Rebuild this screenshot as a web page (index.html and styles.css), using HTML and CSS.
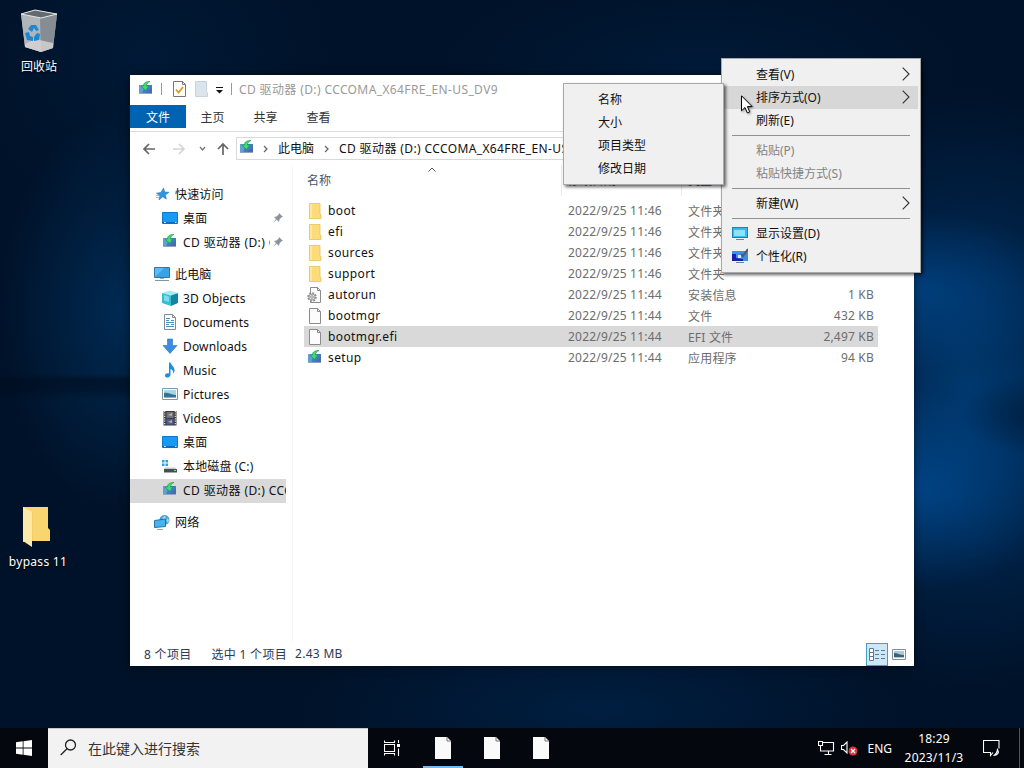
FILE: index.html
```html
<!DOCTYPE html>
<html lang="zh-CN">
<head>
    <meta charset="UTF-8">
    <meta name="viewport" content="width=device-width, initial-scale=1.0">
    <title>CD 驱动器 (D:) CCCOMA_X64FRE_EN-US_DV9</title>
    <link rel="stylesheet" href="styles.css">
</head>
<body>
    <svg class="sprite" width="0" height="0">
        <symbol id="i-setup" viewBox="0 0 16 16">
            <path d="M1 4h13v9H1z" fill="#3f7fc1"/>
            <path d="M1 4h6l-3 9H1z" fill="#5fa0cf"/>
            <path d="M7 13l7-7v7z" fill="#4f68b5"/>
            <path d="M1 12h13v1H1z" fill="#8fa6bd"/>
            <path d="M12 .5C8 .5 5.500 1.500 5.500 5H3l4.500 4.500L11 5H8.500C8.500 3 9.500 1.500 12 .5z" fill="#3ddc70" stroke="#178f4a" stroke-width=".6"/>
        </symbol>
        <symbol id="i-folder" viewBox="0 0 16 16">
            <path d="M2 .5h11v10l1 1v4H2z" fill="#fbdc79"/>
            <path d="M2 .5h3v15H2z" fill="#fde79b"/>
            <path d="M2.500 .5h10.500v10.500l1 1v3.500H2.500z" fill="none" stroke="#e3c15d" stroke-width=".8"/>
        </symbol>
        <symbol id="i-file" viewBox="0 0 16 16">
            <path d="M2.500 .5h8l3 3v12h-11z" fill="#fcfcfc" stroke="#8b8b8b"/>
            <path d="M10.500 .5v3h3" fill="none" stroke="#8b8b8b"/>
        </symbol>
        <symbol id="i-autorun" viewBox="0 0 16 16">
            <path d="M3.500 .5h7l3 3v12h-10z" fill="#fcfcfc" stroke="#8b8b8b"/>
            <path d="M10.500 .5v3h3" fill="none" stroke="#8b8b8b"/>
            <circle cx="5" cy="10" r="4" fill="#e4e4e4" stroke="#8c8c8c" stroke-width="1.600" stroke-dasharray="1.800 1.300"/>
            <circle cx="5" cy="10" r="3" fill="#e8e8e8" stroke="#8c8c8c" stroke-width=".8"/>
            <circle cx="5" cy="10" r="1.300" fill="#fff" stroke="#777" stroke-width=".8"/>
        </symbol>
        <symbol id="i-desktop" viewBox="0 0 16 16">
            <path d="M.5 2.500h15v11H.5z" fill="#1a98f5" stroke="#1177c8"/>
            <path d="M1 12h14v1.500H1z" fill="#0c6ab8"/>
            <path d="M2 12.500h2M13 12.500h1.500" stroke="#bfe2ff"/>
        </symbol>
        <symbol id="i-star" viewBox="0 0 16 16">
            <path d="M9.500 2l1.200 4 4.300.3-3.500 2.500.8 4.200-3.600-2.200L5 14l.9-4.300L2.500 7.200l4.500-.8z" fill="#2f97e0" stroke="#1c78bd" stroke-width=".6"/>
            <path d="M2 9.500h3M2 11.500h3" stroke="#5fb2ec" stroke-width=".8"/>
        </symbol>
        <symbol id="i-pc" viewBox="0 0 16 16">
            <path d="M.5 1.500h15v10H.5z" fill="#5cbcf5" stroke="#35749f"/>
            <path d="M1 11L10 2h5v9z" fill="#36a3e8"/>
            <path d="M1 14.500h14" stroke="#7f97a5"/>
            <path d="M6 12.500h4" stroke="#9ab"/>
        </symbol>
        <symbol id="i-cube" viewBox="0 0 16 16">
            <path d="M0 3l8-2.500L16 3 9 5.500z" fill="#a6eaf4"/>
            <path d="M0 3l9 2.500V16l-9-3z" fill="#35bdd6"/>
            <path d="M9 5.500L16 3v10l-7 3z" fill="#10869f"/>
            <path d="M2 5l5 1.500V12l-5-1.500z" fill="#7edbea"/>
        </symbol>
        <symbol id="i-doc" viewBox="0 0 16 16">
            <path d="M2.500 .5h8l3 3v12h-11z" fill="#fff" stroke="#7f8b93"/>
            <path d="M10.500 .5v3h3" fill="none" stroke="#7f8b93"/>
            <path d="M4 4.500h4M4 6.500h3M9 6.500h3M4 8.500h8M4 10.500h3M9 10.500h3M4 12.500h8" stroke="#4b8cb9"/>
        </symbol>
        <symbol id="i-down" viewBox="0 0 16 16">
            <path d="M5.500 1h5v6.500H15L8 15.500 1 7.500h4.500z" fill="#3a8de0" stroke="#2a72bf" stroke-width=".6"/>
        </symbol>
        <symbol id="i-music" viewBox="0 0 16 16">
            <path d="M7 .5h1.500C9 3.500 13 4.500 12.500 9c-.5 1.500-1 2-1.500 2.500.5-3-1-4-2.500-4.500V13c-.5 3-5.500 3.500-5.500.8C3 11.500 5.500 11 7 11.500z" fill="#1a8fdc"/>
        </symbol>
        <symbol id="i-picture" viewBox="0 0 16 16">
            <path d="M.5 2.500h15v11H.5z" fill="#fff" stroke="#8395a0"/>
            <path d="M2 4h12v8H2z" fill="#a8d4ee"/>
            <path d="M2 7c4-1 7 2 12 2v3H2z" fill="#3c6f92"/>
            <path d="M2 11h12v1H2z" fill="#7db5c9"/>
        </symbol>
        <symbol id="i-video" viewBox="0 0 16 16">
            <path d="M1.500 1h13v14.500h-13z" fill="#3a3a3a"/>
            <path d="M2.700 1v14.500M13.300 1v14.500" stroke="#e8e8e8" stroke-width="1.200" stroke-dasharray="1.200 1.200"/>
            <path d="M4.500 2h7v6h-7z" fill="#74708a"/>
            <path d="M4.500 9h7v5.500h-7z" fill="#4f5aa0"/>
            <path d="M6 5l4-2v3zM6 12l4-2v3z" fill="#d5b548"/>
        </symbol>
        <symbol id="i-disk" viewBox="0 0 16 16">
            <path d="M0 2h2.500v2.500H0zM3.500 2H6v2.500H3.500zM0 5.500h2.500V8H0zM3.500 5.500H6V8H3.500z" fill="#22a4dc"/>
            <path d="M3 9.500h10l1.500 2h-13z" fill="#c6cacc"/>
            <path d="M2 11h13v3.500H2z" fill="#4a4d50"/>
            <path d="M12 12.500h2" stroke="#7ee08c"/>
        </symbol>
        <symbol id="i-network" viewBox="0 0 16 16">
            <circle cx="10.500" cy="6" r="5" fill="#4a9fcf"/>
            <path d="M8 4l3-2.500 1 2.500-2 2zM13 4l2 2-1 3-1.500-2z" fill="#a9d8ec"/>
            <path d="M.5 6.500l11-1.500v7.500l-11 1z" fill="#45b3f2" stroke="#27729e"/>
            <path d="M3 15.500h6" stroke="#7eaac4"/>
        </symbol>
        <symbol id="i-pin" viewBox="0 0 12 12">
            <path d="M7 1l4 4-1.500.3L7.500 7.500 7 10 4.800 7.800 1 11l3-4L2 5l2.500-.5L6.700 2.500z" fill="#8b949b"/>
        </symbol>
        <symbol id="i-page" viewBox="0 0 16 22">
            <path d="M0 0h12l4 4v18H0z" fill="#fafafa"/>
            <path d="M12 0v4h4" fill="none" stroke="#777"/>
        </symbol>
        <symbol id="i-more" viewBox="0 0 8 14">
            <path d="M.7 .7L7 7 .7 13.300" fill="none" stroke="#333" stroke-width="1.100"/>
        </symbol>
        <symbol id="i-crumb" viewBox="0 0 5 8">
            <path d="M1 1l3 3-3 3" fill="none" stroke="#666" stroke-width="1.300"/>
        </symbol>
    </svg>

    <main class="desktop">
        <div class="shortcut recycle">
            <svg width="40" height="44" viewBox="0 0 40 44">
                <path d="M1 5L15 1l22 4-4 34-12 4L5 38z" fill="#a3a9ae"/>
                <path d="M1 5l19 4 1 34L5 38z" fill="#b0b5ba"/>
                <path d="M20 9l17-4-4 34-12 4z" fill="#858d93"/>
                <path d="M5 35l10-5 18 4v5l-12 4L5 38z" fill="#d9d5d5" opacity=".8"/>
                <path d="M1 5l14-4 22 4-16 4z" fill="#646b70" stroke="#e3e6e8"/>
                <path d="M8 20l3-4h5l3 5-3 1-2-3-2 4zM5 24l4-1 1 4 3 1v4l-6-1zM14 28l3-4 3 1-1 6-5 1z" fill="#1f87cf"/>
            </svg>
            <span>回收站</span>
        </div>
        <div class="shortcut bypass">
            <svg width="28" height="42" viewBox="0 0 28 42">
                <path d="M0 1h25v21l2 2v11H8L0 36z" fill="#f9d56f"/>
                <path d="M0 1l9 5v35l-9-6z" fill="#fde9a8"/>
                <path d="M9 5h1v30H9z" fill="#f3cd66"/>
            </svg>
            <span>bypass 11</span>
        </div>

        <section class="window">
            <header class="titlebar">
                <svg class="icon"><use href="#i-setup"/></svg>
                <i class="sep"></i>
                <svg class="quick check" viewBox="0 0 13 16">
                    <path d="M.5 .5h9l3 3v12H.5z" fill="#fff" stroke="#7d7370"/>
                    <path d="M9.500 .5v3h3" fill="none" stroke="#7d7370"/>
                    <path d="M3 8.500l2.500 3L10 6" fill="none" stroke="#e29a1c" stroke-width="1.800"/>
                </svg>
                <svg class="quick blank" viewBox="0 0 13 16">
                    <path d="M.5 .5h11v10l1 1v4H.5z" fill="#dbe3ec" stroke="#c9d3de"/>
                </svg>
                <svg class="drop" viewBox="0 0 7 7"><path d="M0 .5h7" stroke="#111"/><path d="M0 3h7L3.500 6.500z" fill="#111"/></svg>
                <i class="sep near"></i>
                <h1>CD 驱动器 (D:) CCCOMA_X64FRE_EN-US_DV9</h1>
            </header>
            <nav class="tabs">
                <span class="tab file">文件</span>
                <span class="tab">主页</span>
                <span class="tab">共享</span>
                <span class="tab">查看</span>
            </nav>
            <div class="toolbar">
                <svg class="arrows" width="94" height="14" viewBox="0 0 94 14" fill="none" stroke="#666" stroke-width="1.700">
                    <path d="M7 2L2 7l5 5M2 7h11"/>
                    <path d="M37 2l5 5-5 5M42 7H31" stroke="#d4d4d4"/>
                    <path d="M58 5l2.500 3L63 5" stroke="#777" stroke-width="1.300"/>
                    <path d="M76 7l5-5 5 5M81 2v11"/>
                </svg>
                <div class="address">
                    <svg class="icon"><use href="#i-setup"/></svg>
                    <svg class="crumb"><use href="#i-crumb"/></svg>
                    <span>此电脑</span>
                    <svg class="crumb last"><use href="#i-crumb"/></svg>
                    <span class="path">CD 驱动器 (D:) CCCOMA_X64FRE_EN-US_DV9</span>
                </div>
            </div>
            <div class="content">
                <ul class="tree">
                    <li class="root"><svg class="icon"><use href="#i-star"/></svg>快速访问</li>
                    <li><svg class="icon"><use href="#i-desktop"/></svg>桌面<svg class="pin"><use href="#i-pin"/></svg></li>
                    <li><svg class="icon"><use href="#i-setup"/></svg><span class="cut">CD 驱动器 (D:) CCCOMA</span><svg class="pin"><use href="#i-pin"/></svg></li>
                    <li class="root"><svg class="icon"><use href="#i-pc"/></svg>此电脑</li>
                    <li><svg class="icon"><use href="#i-cube"/></svg>3D Objects</li>
                    <li><svg class="icon"><use href="#i-doc"/></svg>Documents</li>
                    <li><svg class="icon"><use href="#i-down"/></svg>Downloads</li>
                    <li><svg class="icon"><use href="#i-music"/></svg>Music</li>
                    <li><svg class="icon"><use href="#i-picture"/></svg>Pictures</li>
                    <li><svg class="icon"><use href="#i-video"/></svg>Videos</li>
                    <li><svg class="icon"><use href="#i-desktop"/></svg>桌面</li>
                    <li><svg class="icon"><use href="#i-disk"/></svg>本地磁盘 (C:)</li>
                    <li class="selected"><svg class="icon"><use href="#i-setup"/></svg><span>CD 驱动器 (D:) CCCOMA</span></li>
                    <li class="root"><svg class="icon"><use href="#i-network"/></svg>网络</li>
                </ul>
                <div class="files">
                    <div class="head">
                        <span>名称</span><span>修改日期</span><span>类型</span><span></span>
                        <svg class="sort" viewBox="0 0 8 5"><path d="M.5 4.500L4 1l3.500 3.500" fill="none" stroke="#555"/></svg>
                    </div>
                    <div class="row"><svg class="icon"><use href="#i-folder"/></svg><b>boot</b><span>2022/9/25 11:46</span><span>文件夹</span><em></em></div>
                    <div class="row"><svg class="icon"><use href="#i-folder"/></svg><b>efi</b><span>2022/9/25 11:46</span><span>文件夹</span><em></em></div>
                    <div class="row"><svg class="icon"><use href="#i-folder"/></svg><b>sources</b><span>2022/9/25 11:46</span><span>文件夹</span><em></em></div>
                    <div class="row"><svg class="icon"><use href="#i-folder"/></svg><b>support</b><span>2022/9/25 11:46</span><span>文件夹</span><em></em></div>
                    <div class="row"><svg class="icon"><use href="#i-autorun"/></svg><b>autorun</b><span>2022/9/25 11:44</span><span>安装信息</span><em>1 KB</em></div>
                    <div class="row"><svg class="icon"><use href="#i-file"/></svg><b>bootmgr</b><span>2022/9/25 11:44</span><span>文件</span><em>432 KB</em></div>
                    <div class="row selected"><svg class="icon"><use href="#i-file"/></svg><b>bootmgr.efi</b><span>2022/9/25 11:44</span><span>EFI 文件</span><em>2,497 KB</em></div>
                    <div class="row"><svg class="icon"><use href="#i-setup"/></svg><b>setup</b><span>2022/9/25 11:44</span><span>应用程序</span><em>94 KB</em></div>
                </div>
            </div>
            <footer class="status">
                <span>8 个项目</span>
                <span>选中 1 个项目</span>
                <span>2.43 MB</span>
                <div class="views">
                    <div class="view active">
                        <svg width="16" height="14" viewBox="0 0 16 14" fill="none" stroke="#5b7c92">
                            <path d="M.5 .5h4v12h-4zM.5 4.500h4M.5 8.500h4" fill="#fff"/>
                            <path d="M6 2.500h4M12 2.500h4M6 6.500h4M12 6.500h4M6 10.500h4M12 10.500h4"/>
                        </svg>
                    </div>
                    <svg class="large" viewBox="0 0 14 11">
                        <path d="M.5 .5h13v10H.5z" fill="#fff" stroke="#7c8f9b"/>
                        <path d="M2 2h10v7H2z" fill="#a9c9dc"/>
                        <path d="M2 4c3 0 6 2 10 2v2H2z" fill="#3f6076"/>
                    </svg>
                </div>
            </footer>
        </section>

        <ul class="menu context">
            <li>查看(V)<svg class="more"><use href="#i-more"/></svg></li>
            <li class="hover">排序方式(O)<svg class="more"><use href="#i-more"/></svg></li>
            <li>刷新(E)</li>
            <li class="line"></li>
            <li class="disabled">粘贴(P)</li>
            <li class="disabled">粘贴快捷方式(S)</li>
            <li class="line"></li>
            <li>新建(W)<svg class="more"><use href="#i-more"/></svg></li>
            <li class="line"></li>
            <li>
                <svg class="icon" viewBox="0 0 16 16">
                    <path d="M0 2h16v11H0z" fill="#1f83b8"/>
                    <path d="M1 3h14v9H1z" fill="#35b8ee"/>
                    <path d="M2 5h11v6H2z" fill="#8ce4fb"/>
                    <path d="M4 14.500h8" stroke="#6b8797"/>
                </svg>显示设置(D)
            </li>
            <li>
                <svg class="icon" viewBox="0 0 16 16">
                    <path d="M0 3h16v10H0z" fill="#3d8fe0"/>
                    <path d="M0 6h4v4l7 1v2H0z" fill="#1a1fb0"/>
                    <path d="M6 7h3v3H6z" fill="#d9ecff"/>
                    <path d="M9 6l2 2 5-7" fill="none" stroke="#4a5c6c" stroke-width="2"/>
                    <path d="M4 14.500h8" stroke="#6b8797"/>
                </svg>个性化(R)
            </li>
        </ul>
        <ul class="menu submenu">
            <li>名称</li>
            <li>大小</li>
            <li>项目类型</li>
            <li>修改日期</li>
        </ul>
        <svg class="cursor" viewBox="0 0 12 19"><path d="M.5 .8v15l3.500-3.300 2.300 5.400 2.400-1-2.300-5.300h4.800z" fill="#fff" stroke="#000"/></svg>
    </main>

    <footer class="taskbar">
        <div class="start">
            <svg width="16" height="16" viewBox="0 0 16 16" fill="#fff"><path d="M0 2.200L6.700 1.300v6.300H0zM7.500 1.200L16 0v7.600H7.500zM0 8.400h6.700v6.300L0 13.800zM7.500 8.400H16V16l-8.500-1.200z"/></svg>
        </div>
        <div class="search">
            <svg width="17" height="17" viewBox="0 0 17 17" fill="none" stroke="#222" stroke-width="1.300"><circle cx="10.500" cy="6" r="5"/><path d="M7 9.800L.7 16"/></svg>
            <span>在此键入进行搜索</span>
        </div>
        <div class="taskview">
            <svg width="17" height="16" viewBox="0 0 17 16" fill="none" stroke="#fff" stroke-width="1.100">
                <path d="M.5 .5v2h10v-2M.5 15.500v-2h10v2M.5 4.500h10v7H.5zM14.500 0v3M14.500 8.500V16"/>
                <path d="M13 4h3v3h-3z" fill="#fff" stroke="none"/>
            </svg>
        </div>
        <div class="task active"><svg><use href="#i-page"/></svg></div>
        <div class="task"><svg><use href="#i-page"/></svg></div>
        <div class="task"><svg><use href="#i-page"/></svg></div>
        <div class="tray">
            <svg width="17" height="14" viewBox="0 0 17 14" fill="none" stroke="#fff" stroke-width="1.100">
                <path d="M5 1.500h10.500v8.500H4.500M10.500 10v3.500M6.500 13.500h7"/>
                <path d="M.5 .5h4v4h-4zM2.500 4.500v5.500h2"/>
            </svg>
            <svg class="sound" width="18" height="15" viewBox="0 0 18 15">
                <path d="M.5 4.500h2L6 1v11L2.500 8.500h-2z" fill="none" stroke="#fff" stroke-width="1.100"/>
                <circle cx="12" cy="10" r="4.500" fill="#d9333f"/>
                <path d="M10 8l4 4M14 8l-4 4" stroke="#fff" stroke-width="1.200"/>
            </svg>
            <span class="lang">ENG</span>
            <div class="clock"><span>18:29</span><span>2023/11/3</span></div>
            <svg class="notice" width="17" height="17" viewBox="0 0 17 17">
                <path d="M10 12.500L7.500 15.500v-3H.5V.5h15.500v8" fill="none" stroke="#fff" stroke-width="1.100"/>
                <path d="M14.500 9.500c2 3 0 6-4 6 2.500-1 3.500-3 4-6z" fill="none" stroke="#fff" stroke-width="1.200"/>
            </svg>
            <i class="peek"></i>
        </div>
    </footer>
</body>
</html>
```

FILE: styles.css
```css
* {
    box-sizing: border-box;
    margin: 0;
    padding: 0;
}
body {
    font-family: 'Noto Sans', 'Noto Sans CJK SC', sans-serif;
    font-size: 12px;
    color: #111;
    width: 1024px;
    height: 768px;
    overflow: hidden;
    display: flex;
    flex-direction: column;
}
ul {
    list-style: none;
}
svg {
    flex: none;
    display: block;
}
.sprite {
    position: absolute;
}
.icon {
    width: 16px;
    height: 16px;
}

/* desktop */
.desktop {
    position: relative;
    height: 728px;
    background:
        radial-gradient(ellipse 80px 40px at 1040px 415px, rgba(0, 20, 45, 0.55), transparent),
        radial-gradient(ellipse 150px 80px at 915px 290px, rgba(0, 85, 165, 0.5), transparent),
        radial-gradient(ellipse 150px 100px at 915px 490px, rgba(0, 90, 175, 0.55), transparent),
        radial-gradient(ellipse 240px 300px at 970px 390px, rgba(0, 70, 135, 0.75), rgba(0, 55, 110, 0.4) 55%, transparent),
        linear-gradient(transparent 374px, rgba(0, 12, 28, 0.55) 380px, rgba(0, 12, 28, 0.45) 390px, transparent 400px) 0 0 / 130px 100% no-repeat,
        radial-gradient(ellipse 120px 200px at 120px 310px, rgba(0, 58, 110, 0.6), transparent),
        radial-gradient(ellipse 180px 160px at 150px 60px, rgba(0, 50, 100, 0.22), transparent),
        radial-gradient(ellipse 300px 90px at 600px 710px, rgba(0, 50, 100, 0.4), transparent),
        radial-gradient(ellipse 260px 100px at 700px 70px, rgba(0, 50, 100, 0.25), transparent),
        #001229;
}
.shortcut {
    position: absolute;
    width: 76px;
    display: flex;
    flex-direction: column;
    align-items: center;
    color: #fff;
    line-height: 18px;
    text-shadow: 0 1px 2px #000;
}
.recycle {
    left: 1px;
    top: 9px;
}
.recycle svg {
    margin-right: -2px;
}
.recycle span {
    margin-top: 5px;
}
.bypass {
    left: 0;
    top: 506px;
    letter-spacing: 0.3px;
}
.bypass svg {
    margin-right: 3px;
}
.bypass span {
    margin-top: 5px;
}

/* explorer window */
.window {
    position: absolute;
    left: 130px;
    top: 75px;
    width: 784px;
    height: 591px;
    background-color: #fff;
    display: flex;
    flex-direction: column;
    box-shadow: 0 0 8px rgba(0, 0, 0, 0.5);
}
.titlebar {
    height: 30px;
    display: flex;
    align-items: center;
    padding: 0 0 2px 8px;
}
.titlebar .sep {
    width: 1px;
    height: 12px;
    margin: 0 11px 0 7px;
    background-color: #999;
}
.titlebar .near {
    margin: 0 7px 0 8px;
}
.quick {
    width: 13px;
    height: 16px;
    margin-right: 9px;
}
.titlebar .blank {
    margin-right: 8px;
}
.drop {
    width: 7px;
    height: 7px;
    margin-top: 3px;
}
h1 {
    font-size: 12px;
    font-weight: normal;
    color: #999;
}
h1,
.path {
    letter-spacing: 0.38px;
}
.tabs {
    height: 27px;
    display: flex;
    border-bottom: 1px solid #dcdcdc;
}
.tab {
    width: 53px;
    height: 23px;
    line-height: 25px;
    text-align: center;
    color: #333;
}
.tab.file {
    width: 56px;
    background-color: #0063b1;
    color: #fff;
}
.toolbar {
    height: 33px;
    display: flex;
    align-items: center;
    padding-left: 12px;
}
.address {
    flex: 1;
    height: 23px;
    margin-right: 200px;
    display: flex;
    align-items: center;
    border: 1px solid #d9d9d9;
    padding: 0 0 2px 2px;
    white-space: nowrap;
}
.crumb {
    width: 5px;
    height: 8px;
    margin: 2px 10px 0 8px;
}
.address .last {
    margin: 2px 10px 0 10px;
}
.content {
    flex: 1;
    display: flex;
    min-height: 0;
}
.tree {
    width: 156px;
    padding-top: 18px;
    overflow: hidden;
}
.tree li {
    height: 24px;
    display: flex;
    align-items: center;
    gap: 5px;
    padding: 0 0 2px 32px;
    white-space: nowrap;
    letter-spacing: 0.15px;
}
.tree .root {
    padding-left: 24px;
}
.tree .root + li ~ .root {
    margin-top: 8px;
}
.tree .selected,
.row.selected {
    background-color: #d9d9d9;
}
.tree .selected {
    letter-spacing: 0.4px;
}
.pin {
    width: 12px;
    height: 12px;
    margin-left: auto;
    margin-right: 2px;
}
.tree .cut {
    width: 87px;
    overflow: hidden;
    margin-right: -3px;
    letter-spacing: 0.4px;
}
.files {
    flex: 1;
    margin-left: 6px;
    padding-left: 11px;
    border-left: 1px solid #f7f7f7;
}
.head {
    position: relative;
    height: 28px;
    margin-bottom: 7px;
    display: grid;
    grid-template-columns: 257px 120px 120px 1fr;
    line-height: 31px;
    color: #44566b;
}
.head span {
    padding-left: 3px;
}
.head span + span {
    border-left: 1px solid #e9e9e9;
    padding-left: 6px;
}
.sort {
    position: absolute;
    left: 124px;
    top: 2px;
    width: 8px;
    height: 5px;
}
.row {
    width: 574px;
    height: 21px;
    padding: 0 4px;
    display: grid;
    grid-template-columns: 16px 244px 120px 100px 1fr;
    align-items: center;
    color: #6d6d6d;
    letter-spacing: 0.2px;
}
.row b {
    font-weight: normal;
    color: #111;
    padding-left: 4px;
    letter-spacing: 0.4px;
}
.row .icon {
    margin-left: -1px;
}
.row em {
    font-style: normal;
    text-align: right;
}
.status {
    height: 23px;
    display: flex;
    align-items: center;
    padding-left: 14px;
    color: #2c3a55;
    letter-spacing: 0.3px;
}
.status span {
    margin-right: 20px;
    padding-bottom: 2px;
}
.status span + span {
    margin-right: 8px;
}
.views {
    margin-left: auto;
    display: flex;
    align-items: center;
    gap: 4px;
    padding-right: 8px;
}
.view.active {
    width: 22px;
    height: 23px;
    background-color: #cce8f8;
    border: 1px solid #3f9fc9;
    display: flex;
    align-items: center;
    justify-content: center;
}
.large {
    width: 14px;
    height: 11px;
}

/* menus */
.menu {
    position: absolute;
    background-color: #f0f0f0;
    border: 1px solid #a8a8a8;
    box-shadow: 2px 2px 3px rgba(0, 0, 0, 0.6);
}
.menu li {
    height: 23px;
    display: flex;
    align-items: center;
    padding-bottom: 2px;
}
.context {
    left: 721px;
    top: 58px;
    width: 200px;
    height: 215px;
    padding: 4px 2px;
}
.context li {
    padding-left: 32px;
}
.context .hover {
    background-color: #d7d7d7;
}
.context .disabled {
    color: #838383;
}
.context .line {
    height: 1px;
    margin: 3px 8px;
    padding: 0;
    background-color: #909090;
}
.context .icon {
    margin: 0 8px 0 -24px;
}
.more {
    width: 8px;
    height: 14px;
    margin-left: auto;
    margin-right: 8px;
}
.submenu {
    left: 563px;
    top: 83px;
    width: 161px;
    height: 102px;
    padding-top: 4px;
}
.submenu li {
    padding-left: 34px;
}
.cursor {
    position: absolute;
    left: 741px;
    top: 95px;
    width: 12px;
    height: 19px;
    filter: drop-shadow(1px 1px 1px rgba(0, 0, 0, 0.4));
}

/* taskbar */
.taskbar {
    height: 40px;
    display: flex;
    align-items: center;
    background-color: #04070d;
    color: #fff;
}
.start {
    width: 48px;
    display: flex;
    justify-content: center;
}
.search {
    width: 320px;
    height: 40px;
    padding: 0 0 2px 12px;
    display: flex;
    align-items: center;
    gap: 11px;
    background-color: #f2f2f2;
    border-top: 1px solid #c8c8c8;
    color: #333;
    font-size: 14px;
}
.taskview {
    width: 55px;
    padding-left: 16px;
}
.task {
    width: 40px;
    height: 40px;
    margin-right: 9px;
    display: flex;
    align-items: center;
    justify-content: center;
}
.task svg {
    width: 16px;
    height: 22px;
}
.task.active {
    border-bottom: 2px solid #76b9ed;
    padding-top: 2px;
}
.tray {
    flex: 1;
    height: 40px;
    display: flex;
    align-items: center;
    justify-content: flex-end;
}
.sound {
    margin-left: 6px;
}
.lang {
    margin-left: 8px;
}
.clock {
    width: 64px;
    margin-left: 10px;
    display: flex;
    flex-direction: column;
    align-items: center;
    line-height: 19px;
    letter-spacing: 0.2px;
}
.notice {
    margin: 0 19px 0 17px;
}
.peek {
    width: 1px;
    height: 40px;
    margin-right: 4px;
    background-color: #555;
}
```
